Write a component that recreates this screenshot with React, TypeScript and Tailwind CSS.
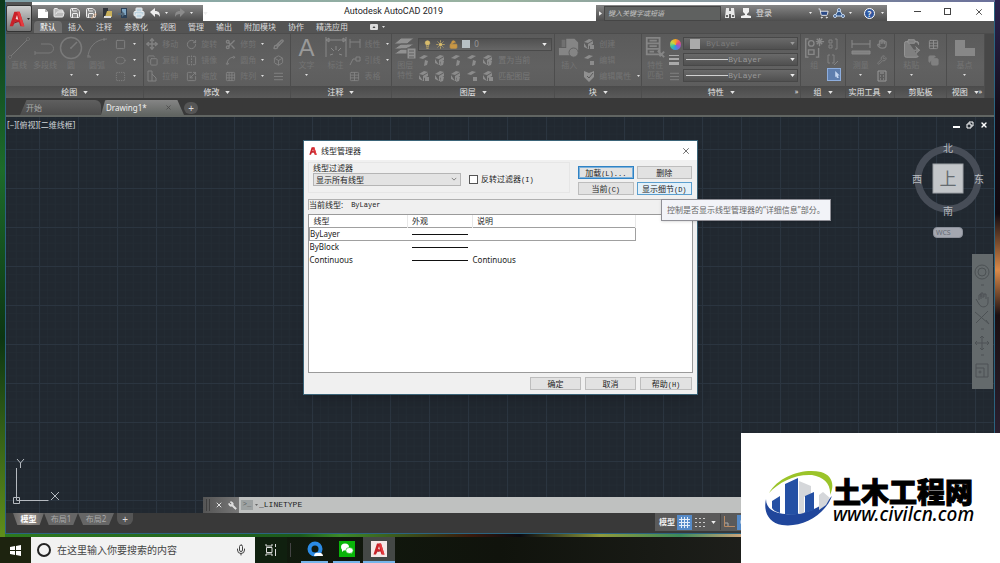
import type { ReactNode } from 'react';
import {
  AlignJustify, Box, Brush, Circle, ClipboardPaste, Copy, FlipHorizontal, FolderOpen, Grid3x3, Hand,
  Lightbulb, Mic, Move, Pencil, Printer, RotateCw, Save, Scaling, Scissors, ShoppingCart,
  Spline, Square, SquareDashed, Sun, Table, Unlock, Wrench, X,
} from 'lucide-react';

const MENU = ['默认', '插入', '注释', '参数化', '视图', '管理', '输出', '附加模块', '协作', '精选应用'];

const LINETYPES = [
  { name: 'ByLayer', note: '' },
  { name: 'ByBlock', note: '' },
  { name: 'Continuous', note: 'Continuous' },
];

const small = { size: 11, strokeWidth: 2 };

/* ── Shared bits ── */

function Caret({ className = '', large = false }: { className?: string; large?: boolean }) {
  return (
    <svg viewBox="0 0 6 4" className={`shrink-0 ${large ? 'w-[5px] h-[3px]' : 'w-[3px] h-0.5'} ${className}`}>
      <path d="M0 0h6L3 4z" fill="currentColor" />
    </svg>
  );
}

function Panel({ title, className, caret = true, more = false, children }: {
  title: string; className: string; caret?: boolean; more?: boolean; children: ReactNode;
}) {
  return (
    <section className={`flex flex-col min-w-0 border-r border-[#4d4d4d] ${className}`}>
      <div className="flex h-[52px] pt-0.5 overflow-hidden text-[#7a7a7a]">{children}</div>
      <h2 className="relative flex h-3 items-center justify-center gap-1.5 bg-linear-to-b from-[#4b4b4b] to-[#5a5a5a] text-[#e4e4e4]">
        {title}
        {caret && <Caret large />}
        {more && <span className="absolute right-0.5 text-[7px]">»</span>}
      </h2>
    </section>
  );
}

function BigTool({ label, label2, caret, className = 'w-[26px]', children }: {
  label: string; label2?: string; caret?: boolean; className?: string; children: ReactNode;
}) {
  return (
    <button className={`flex flex-col items-center shrink-0 ${className}`}>
      <span className="flex h-6 items-center justify-center">{children}</span>
      <span className="leading-[10px] whitespace-nowrap text-[#747474]">{label}</span>
      {label2 && <span className="leading-[10px] text-[#747474]">{label2}</span>}
      {caret && <Caret className="mt-1 text-[#ddd]" />}
    </button>
  );
}

function Tool({ label, caret, className = '', children }: {
  label?: string; caret?: boolean; className?: string; children: ReactNode;
}) {
  return (
    <button className={`flex h-4 items-center gap-1 ${className}`} aria-label={label ?? 'tool'}>
      <span className="w-3 flex justify-center shrink-0 text-[#828282]">{children}</span>
      {label && <span className="whitespace-nowrap text-[#747474]">{label}</span>}
      {caret && <Caret className="ml-auto text-[#ddd]" />}
    </button>
  );
}

function Stack({ className = '', children }: { className?: string; children: ReactNode }) {
  return <div className={`flex flex-col shrink-0 ${className}`}>{children}</div>;
}

function LayerIcon({ dot }: { dot: number }) {
  return (
    <svg viewBox="0 0 12 12" className="w-3 h-3" fill="#8c8c8c">
      <path d="M1 4l5-3 4 1-5 3z" />
      {dot % 2 === 0 && <path d="M1 5v4l4 2V6l5-3v3L6 8v3H5z" />}
      <path d={dot % 3 === 0 ? 'M7 7h4v4H7z' : 'M7 6l3 1-1 4-3 1z'} />
    </svg>
  );
}

function AutocadA({ className }: { className: string }) {
  return (
    <svg viewBox="0 0 24 24" className={className}>
      <path d="M1 23L8 1h8l7 22h-6l-2-6-6-1-3 7z" fill="#c92229" />
      <path d="M10 12l2-6 2 7z" fill="#f2dada" />
      <path d="M1 23l9-7h5l-9 3z" fill="#8b1117" />
      <path d="M12 1h4l7 22h-4z" fill="#e63b3f" />
    </svg>
  );
}

function ArrowBack({ className = '' }: { className?: string }) {
  return (
    <svg viewBox="0 0 12 12" className={`w-3 h-3 ${className}`} fill="currentColor">
      <path d="M1 5l5-4v3c4 0 5 2 5 6-1-2-2-3-5-3v3z" />
    </svg>
  );
}

/* ── Title bar and menu ── */

function TitleBar() {
  return (
    <div className="flex h-[19px] bg-white">
      <div className="flex w-[171px] mt-[3px] items-center bg-linear-to-b from-[#858585] to-[#4d4d4d] text-[#eee] pl-[5px] gap-1">
        <button aria-label="新建">
          <svg viewBox="0 0 12 12" className="w-3 h-3"><path d="M1 2h7l3 3v6H1z" fill="#fff" /><path d="M8 2v3h3" fill="#bbb" /></svg>
        </button>
        <button aria-label="打开"><FolderOpen size={12} fill="#bbb" /></button>
        <button aria-label="保存"><Save size={12} fill="#888" /></button>
        <button aria-label="另存为" className="flex">
          <Save size={12} fill="#888" />
          <Pencil size={6} className="-ml-1.5 self-end text-[#e0a070]" />
        </button>
        <button aria-label="打印机设置">
          <svg viewBox="0 0 12 12" className="w-3 h-3"><path d="M2 1h5v9H2z" fill="#30343a" /><path d="M6 4h5v6H4z" fill="#c9b05a" /><path d="M3 9h7v2H3z" fill="#ddd" /></svg>
        </button>
        <button aria-label="手机">
          <svg viewBox="0 0 12 12" className="w-3 h-3"><path d="M4 1h6v10H4z" fill="#2d4258" /><path d="M5 2h4v6H5z" fill="#7fa6c4" /><path d="M1 6h4V4l3 3-3 3V8H1z" fill="#54697a" /></svg>
        </button>
        <button aria-label="打印"><Printer size={12} fill="#bcd2de" /></button>
        <button aria-label="放弃"><ArrowBack /></button>
        <Caret />
        <button aria-label="重做" className="ml-0.5 text-[#8b8b8b]"><ArrowBack className="-scale-x-100" /></button>
        <Caret />
        <span className="w-px h-3 ml-0.5 bg-[#555]" />
        <Caret large />
      </div>
      <h1 className="flex-1 pr-3 text-center text-[9px] leading-[19px] text-[#222] font-['Roboto',sans-serif]">Autodesk AutoCAD 2019</h1>
      <div className="flex w-[291px] mt-[3px] items-center bg-linear-to-b from-[#858585] to-[#4d4d4d] text-[#eee]">
        <button aria-label="展开" className="w-2 flex justify-center"><Caret large className="-rotate-90" /></button>
        <input
          aria-label="搜索帮助"
          placeholder="键入关键字或短语"
          className="w-[117px] h-[15px] px-[3px] bg-[#5f6160] border border-[#454545] text-[7px] italic placeholder:text-[#c4c4c4]"
        />
        <button aria-label="搜索" className="ml-[3px]">
          <svg viewBox="0 0 12 12" className="w-3 h-3" fill="#e8e8e8"><path d="M2 1h3v3h2V1h3l1 10H7V7H5v4H1z" /><path d="M2 8h2v2H2zM8 8h2v2H8z" fill="#666" /></svg>
        </button>
        <button className="flex items-center gap-1 ml-1 whitespace-nowrap text-[#ddd]">
          <svg viewBox="0 0 12 12" className="w-3 h-3" fill="#f0f0f0"><path d="M3 1h6v4L7 7v1l4 1v2H1V9l4-1V7L3 5z" /></svg>
          登录
        </button>
        <Caret className="ml-[37px]" />
        <button aria-label="商店" className="ml-1.5"><ShoppingCart size={11} fill="#2c4a86" /></button>
        <button aria-label="应用" className="ml-1">
          <svg viewBox="0 0 12 12" className="w-3 h-3" stroke="#c9dcf2" fill="#31558a"><path d="M6 2l4 7H2z" /><circle cx="6" cy="3" r="1.5" /><circle cx="2" cy="9" r="1.5" /><circle cx="10" cy="9" r="1.5" /></svg>
        </button>
        <Caret className="ml-1" />
        <button aria-label="帮助" className="ml-3 w-[11px] h-[11px] rounded-full border border-white bg-[#2f57a0] text-[8px] leading-[9px] font-bold">?</button>
        <Caret className="ml-1.5" />
      </div>
      <div className="flex w-[107px] items-center justify-between pl-[27px] pr-2.5 text-[#333]">
        <button aria-label="最小化" className="w-[7px] h-px bg-[#444]" />
        <button aria-label="最大化" className="w-[7px] h-[7px] border border-[#444]" />
        <button aria-label="关闭"><X size={10} strokeWidth={2} /></button>
      </div>
    </div>
  );
}

function Header() {
  return (
    <header className="flex bg-[#545454]">
      <button aria-label="AutoCAD" className="w-[26px] h-[27px] mt-[3px] flex items-center gap-0.5 pl-0.5 rounded-xs border border-[#333] bg-linear-to-b from-[#cfcfcf] to-[#777] shrink-0">
        <AutocadA className="w-4 h-5" />
        <Caret className="text-[#222]" />
      </button>
      <div className="flex-1 min-w-0">
        <TitleBar />
        <nav className="flex h-3 pl-0.5 text-[#dcdcdc]">
          {MENU.map((item, i) => (
            <button key={item} className={`px-1.5 leading-3 ${i === 0 ? 'bg-[#6e6e6e] text-white rounded-t-sm' : ''}`}>
              {item}
            </button>
          ))}
          <button aria-label="功能区" className="flex items-center gap-1 ml-4">
            <svg viewBox="0 0 8 6" className="w-2 h-1.5"><rect width="8" height="6" rx="1" fill="#ddd" /><path d="M2.500 4L4 2l1.500 2z" fill="#444" /></svg>
            <Caret />
          </button>
        </nav>
      </div>
    </header>
  );
}

/* ── Ribbon ── */

function PropertySelect({ label, swatch }: { label: string; swatch?: boolean }) {
  return (
    <label className="flex h-[13px] items-center border border-[#484848] bg-linear-to-b from-[#6a6a6a] to-[#505050] pr-0.5">
      {swatch
        ? <span className="w-2.5 h-2.5 ml-1.5 mr-1.5 bg-[#aaa]" />
        : <span className="w-[42px] h-px ml-0.5 bg-[#d0d0d0]" />}
      <select aria-label={label} className={`flex-1 min-w-0 appearance-none font-mono ${swatch ? 'text-[#7c7c7c]' : 'text-[#999]'}`}>
        <option>ByLayer</option>
      </select>
      <Caret large className={swatch ? 'text-[#999]' : 'text-[#eee]'} />
    </label>
  );
}

function Ribbon() {
  return (
    <div className="flex bg-linear-to-b from-[#5b5b5b] via-[#616161] to-[#5b5b5b] border-t border-[#4c4c4c]">
      <Panel title="绘图" className="flex-[139]">
        <BigTool label="直线"><svg viewBox="0 0 24 24" className="w-6 h-6" stroke="currentColor"><path d="M3 21L21 3" /><path d="M2 20h2v2H2zM20 2h2v2h-2z" /></svg></BigTool>
        <BigTool label="多段线"><svg viewBox="0 0 24 24" className="w-6 h-6" stroke="currentColor" fill="none"><path d="M2 17h14a4.500 4.500 0 000-9H8M2 15v4" /></svg></BigTool>
        <BigTool label="圆" caret><svg viewBox="0 0 24 24" className="w-6 h-6" stroke="currentColor" fill="none" strokeWidth="1.500"><circle cx="12" cy="12" r="10.500" /><path d="M12 12l6-6M11 12h2" /></svg></BigTool>
        <BigTool label="圆弧" caret><svg viewBox="0 0 24 24" className="w-6 h-6" stroke="currentColor" fill="none"><path d="M3 22C3 12 10 3 22 3M2 20h3v2M19 2v3" /></svg></BigTool>
        <Stack className="ml-1 w-[22px]">
          <Tool caret><Square {...small} /></Tool>
          <Tool caret><Circle {...small} className="scale-y-75" /></Tool>
          <Tool caret><SquareDashed {...small} /></Tool>
        </Stack>
      </Panel>

      <Panel title="修改" className="flex-[147]">
        <Stack className="ml-0.5 w-[39px]">
          <Tool label="移动"><Move size={12} strokeWidth={3} /></Tool>
          <Tool label="复制"><Copy {...small} /></Tool>
          <Tool label="拉伸"><svg viewBox="0 0 12 12" className="w-3 h-3" stroke="currentColor" fill="none"><path d="M2 1h4v10H2zM6 4l4 4v3H6" /></svg></Tool>
        </Stack>
        <Stack className="w-[39px]">
          <Tool label="旋转"><RotateCw {...small} /></Tool>
          <Tool label="镜像"><FlipHorizontal {...small} /></Tool>
          <Tool label="缩放"><Scaling {...small} /></Tool>
        </Stack>
        <Stack className="w-10">
          <Tool label="修剪" caret><Scissors size={11} strokeWidth={3} /></Tool>
          <Tool label="圆角" caret><Spline {...small} /></Tool>
          <Tool label="阵列" caret><Grid3x3 {...small} /></Tool>
        </Stack>
        <Stack className="ml-2">
          <Tool><Brush size={11} strokeWidth={3} /></Tool>
          <Tool><Box {...small} /></Tool>
          <Tool><AlignJustify {...small} /></Tool>
        </Stack>
      </Panel>

      <Panel title="注释" className="flex-[102]">
        <BigTool label="文字" caret className="w-8"><span className="text-[24px] leading-6 text-[#999] font-['Liberation_Sans',sans-serif]">A</span></BigTool>
        <BigTool label="标注">
          <svg viewBox="0 0 24 24" className="w-6 h-6" stroke="#888" fill="none"><path d="M2 1v20M22 1v20M2 4h20M2 4l3-2v4zM22 4l-3-2v4zM6 19l3-1M12 10v4M7 12l3 3M17 12l-3 3M18 19l-3-1" /></svg>
        </BigTool>
        <Stack className="w-10">
          <Tool label="线性" caret><svg viewBox="0 0 12 12" className="w-3 h-3" stroke="currentColor"><path d="M1 1v9M11 1v9M1 4h10" /></svg></Tool>
          <Tool label="引线" caret><svg viewBox="0 0 12 12" className="w-3 h-3" stroke="currentColor" fill="none"><path d="M1 11l3-6h3M7 3h4v4H7z" /></svg></Tool>
          <Tool label="表格"><Table {...small} /></Tool>
        </Stack>
      </Panel>

      <Panel title="图层" className="flex-[164]">
        <BigTool label="图层" label2="特性">
          <svg viewBox="0 0 24 24" className="w-6 h-6" fill="#919191" stroke="#5e5e5e">
            <path d="M1 18l7-5h13l-7 5zM1 13l7-5h13l-7 5zM1 8l7-6h13l-7 6z" /><path d="M14 12h9v11h-9z" /><path d="M16 15h5M16 18h5M16 21h5" />
          </svg>
        </BigTool>
        <div className="flex-1 min-w-0 pr-0.5">
          <div className="flex h-4 items-center">
            <label className="flex flex-1 h-[13px] items-center gap-1 px-1 border border-[#4a4a4a] bg-linear-to-b from-[#515151] to-[#666]">
              <Lightbulb size={9} fill="#d8bc6c" className="text-[#d8bc6c]" />
              <Sun size={9} fill="#d8bc6c" className="text-[#d8bc6c]" />
              <Unlock size={9} fill="#c99745" className="text-[#c99745]" />
              <span className="w-2 h-2 bg-[#b8c0c4]" />
              <select aria-label="图层" className="flex-1 appearance-none text-[#999]"><option>0</option></select>
              <Caret large className="text-[#eee]" />
            </label>
          </div>
          <div className="flex h-4 items-center gap-1">
            {[1, 2, 5, 7, 4].map((n) => <button key={n} aria-label="图层工具"><LayerIcon dot={n} /></button>)}
            <span className="text-[#787878]">置为当前</span>
          </div>
          <div className="flex h-4 items-center gap-1">
            {[6, 8, 10, 3, 12].map((n) => <button key={n} aria-label="图层工具"><LayerIcon dot={n} /></button>)}
            <span className="text-[#787878]">匹配图层</span>
          </div>
        </div>
      </Panel>

      <Panel title="块" className="flex-[87]">
        <BigTool label="插入" className="w-7">
          <svg viewBox="0 0 24 24" className="w-[22px] h-[22px]" fill="#858585"><path d="M9 2h9l4 4v9H9zM1 12h12v8H1z" /><circle cx="17" cy="17" r="5" stroke="#5f5f5f" /><path d="M4 3h4v8H4z" fill="#707070" /></svg>
        </BigTool>
        <Stack className="w-[57px]">
          <Tool label="创建"><LayerIcon dot={6} /></Tool>
          <Tool label="编辑"><LayerIcon dot={3} /></Tool>
          <Tool label="编辑属性" caret><svg viewBox="0 0 12 12" className="w-3 h-3" fill="#909090"><path d="M1 1l5 2 5-2v6l-5 5-5-5z" /><path d="M4 6l2 2 4-5" stroke="#5a5a5a" fill="none" /></svg></Tool>
        </Stack>
      </Panel>

      <Panel title="特性" className="flex-[160]" more>
        <BigTool label="特性" label2="匹配">
          <svg viewBox="0 0 24 24" className="w-[22px] h-[22px]" fill="none" stroke="#858585" strokeWidth="2"><path d="M3 1h14v18H3zM3 7h14M3 13h14M6 4h8M6 10h8M6 16h5M15 15l7 7M22 16l-5 5" /></svg>
        </BigTool>
        <Stack className="w-[15px]">
          <span className="flex h-4 items-center justify-center">
            <span className="w-[11px] h-[11px] rounded-full bg-[conic-gradient(#f5a623,#e94f77,#8c5bd6,#3d8fe0,#37c2a0,#c8d544,#f5a623)]" />
          </span>
          <Tool><svg viewBox="0 0 12 12" className="w-3 h-3" fill="#aaa"><path d="M1 1h10v1H1zM1 4h10v2H1zM1 8h10v3H1z" /></svg></Tool>
          <Tool><AlignJustify {...small} /></Tool>
        </Stack>
        <div className="flex flex-col flex-1 min-w-0 gap-[3px] pr-0.5 pt-px">
          <PropertySelect label="颜色" swatch />
          <PropertySelect label="线宽" />
          <PropertySelect label="线型" />
        </div>
      </Panel>

      <Panel title="组" className="flex-[44]">
        <BigTool label="组">
          <svg viewBox="0 0 24 24" className="w-[22px] h-[22px]" fill="none" stroke="#888" strokeWidth="1.500"><path d="M6 2H3v20h3M14 22h3V12M18 1v9M14 5h9M15 2l6 6M21 2l-6 6" /><circle cx="9" cy="7" r="3" /><path d="M6 14h6v5H6z" /></svg>
        </BigTool>
        <Stack>
          <Tool><svg viewBox="0 0 12 12" className="w-3 h-3" stroke="currentColor" fill="none"><path d="M2 2h3v3H2zM2 7h3v3H2zM8 1h2v10H8" /></svg></Tool>
          <Tool><svg viewBox="0 0 12 12" className="w-3 h-3" stroke="currentColor" fill="none"><path d="M3 1H1v8h2M5 1h2v8H5M7 11l4-4" /></svg></Tool>
          <button aria-label="组选择" className="w-[14px] h-[13px] border border-[#8eaede] bg-[#5f7fae] flex justify-end items-center">
            <svg viewBox="0 0 6 9" className="w-1.5 h-2" fill="#c5d6ef"><path d="M1 0l5 5H4l1 3H3L2 6 1 7z" /></svg>
          </button>
        </Stack>
      </Panel>

      <Panel title="实用工具" className="flex-[49]">
        <BigTool label="测量" caret className="w-[30px]">
          <svg viewBox="0 0 20 20" className="w-5 h-5" stroke="#8a8a8a" fill="#808080"><path d="M1 2v8M19 2v8M1 6h18" fill="none" /><path d="M1 13h18v3H1z" /></svg>
        </BigTool>
        <Stack>
          <Tool><Hand size={10} strokeWidth={3} /></Tool>
          <Tool><Wrench size={10} strokeWidth={2} /></Tool>
          <Tool><svg viewBox="0 0 12 12" className="w-3 h-3" stroke="#999" fill="none"><path d="M2 1h8v10H2zM4 3h4M4 6h1M7 6h1M4 9h1M7 9h1" /></svg></Tool>
        </Stack>
      </Panel>

      <Panel title="剪贴板" className="flex-[51]" caret={false}>
        <BigTool label="粘贴" caret className="w-8"><ClipboardPaste size={21} fill="#808080" strokeWidth={1} className="text-[#999]" /></BigTool>
        <Stack>
          <Tool><Table {...small} className="text-[#909090]" /></Tool>
          <Tool><Copy {...small} fill="#808080" /></Tool>
        </Stack>
      </Panel>

      <Panel title="视图" className="flex-[38]" more>
        <BigTool label="基点" caret className="w-9">
          <svg viewBox="0 0 22 18" className="w-[22px] h-[18px]" fill="#878787"><path d="M1 1h10v8h10v8H1z" /></svg>
        </BigTool>
      </Panel>
      <div className="flex-[9] bg-[#474747]" />
    </div>
  );
}

function FileTabs() {
  return (
    <div className="flex h-[19px] pl-3.5 items-end bg-[#393939] border-b-2 border-[#616562]">
      <button className="flex w-[81px] h-[15px] items-center pl-1.5 rounded-t-md bg-linear-to-b from-[#5f5f5f] to-[#4b4b4b] text-[#aaa] [clip-path:polygon(8%_0,100%_0,100%_100%,0_100%)]">开始</button>
      <div className="flex w-[83px] h-[15px] items-center pl-[5px] rounded-t-md bg-linear-to-b from-[#858585] to-[#616562] text-[#f0f0f0] [clip-path:polygon(5%_0,92%_0,100%_100%,0_100%)]">
        <button>Drawing1*</button>
        <button aria-label="关闭图形" className="ml-auto mr-3 text-[#4d4d4d]"><X size={7} strokeWidth={3} /></button>
      </div>
      <button aria-label="新图形" className="w-3.5 h-3 mb-px rounded-md bg-[#555] text-[10px] leading-3 text-[#ddd]">+</button>
    </div>
  );
}

/* ── Drawing area ── */

function ViewCube() {
  return (
    <div className="absolute right-[9px] top-[25px] w-[74px] h-[100px]">
      <svg viewBox="0 0 74 74" className="w-[74px] h-[74px] overflow-visible">
        <circle cx="37" cy="37" r="30" fill="none" stroke="#474d57" strokeWidth="7" />
        <rect x="22" y="22" width="30" height="29" fill="#c3c6c9" stroke="#9da1a5" />
        <g fill="#b9bcc0" fontSize="10" textAnchor="middle" fontFamily="Noto Sans CJK SC, sans-serif">
          <text x="37" y="10">北</text>
          <text x="37" y="73">南</text>
          <text x="6" y="41">西</text>
          <text x="68" y="41">东</text>
          <text x="37" y="43" fontSize="17" fill="#656b70">上</text>
        </g>
      </svg>
      <button className="flex items-center w-[30px] h-[11px] mt-[11px] mx-auto px-0.5 rounded-sm border border-[#8b8f99] bg-[#a4a7b0] text-[7px] text-[#666b75]">WCS</button>
    </div>
  );
}

function NavigationBar() {
  return (
    <svg viewBox="0 0 21 135" className="absolute right-px top-[137px] w-[21px] h-[135px]" fill="none" stroke="#4c5154">
      <rect x="0" y="0" width="21" height="135" fill="#646a6c" stroke="none" />
      <circle cx="10" cy="18" r="7" /><circle cx="10" cy="18" r="4" />
      <path d="M9 31h3M4 45l3 5c2 4 8 4 9-1v-6M7 46v-5l2-1v5M9 43v-4h2v5M12 43v-3h2v5" />
      <path d="M3 58l14 12M16 57L4 69M14 66l3 4M9 75h3M10 82v14M3 89h14M8 84l2-2 2 2M8 94l2 2 2-2M5 87l-2 2 2 2M15 87l2 2-2 2M9 101h3" />
      <path d="M4 110h12v13H4zM4 114h8v9" /><circle cx="8" cy="118" r="1" />
    </svg>
  );
}

function Canvas() {
  return (
    <main className="relative flex-1 min-h-0 overflow-hidden bg-[#212830]">
      <svg className="absolute inset-0 w-full h-full">
        <defs>
          <pattern id="minor" width="7.800" height="7.800" x="2" y="1" patternUnits="userSpaceOnUse">
            <path d="M0 0h7.800M0 0v7.800" stroke="#252d36" fill="none" />
          </pattern>
          <pattern id="major" width="39" height="39" x="33" y="32" patternUnits="userSpaceOnUse">
            <path d="M0 .500h39M.500 0v39" stroke="#2b3540" fill="none" />
          </pattern>
        </defs>
        <rect width="100%" height="100%" fill="url(#minor)" />
        <rect width="100%" height="100%" fill="url(#major)" />
      </svg>
      <div className="relative flex items-center justify-between pt-0.5 pl-px pr-1.5 text-[#d0d4d8] leading-3">
        <span>[−][俯视][二维线框]</span>
        <div className="flex items-center gap-1.5 text-white">
          <button aria-label="最小化视口" className="w-[7px] h-0.5 mt-1 bg-white" />
          <button aria-label="还原视口">
            <svg viewBox="0 0 8 8" className="w-2 h-2" stroke="#fff" fill="none"><path d="M1 3h4v4H1zM3 3V1h4v4H5" /></svg>
          </button>
          <button aria-label="关闭视口"><X size={8} strokeWidth={4} /></button>
        </div>
      </div>
      <ViewCube />
      <NavigationBar />
      <svg viewBox="0 0 56 50" className="absolute left-1.5 bottom-1.5 w-14 h-[50px]" stroke="#b5bac0" fill="none">
        <path d="M4.500 11v32M4.500 43.500h32M1.500 40.500h6v6h-6zM5 2l3.500 4L12 2M8.500 6v5M39 35l8 8M47 35l-8 8" />
      </svg>
      <div className="absolute left-[197px] right-0 bottom-0 flex h-4">
        <div className="flex w-9 items-center justify-around bg-linear-to-r from-[#555] to-[#777] text-[#e0e0e0]">
          <span className="w-1 h-3 border-x border-[#3f3f3f]" />
          <button aria-label="关闭命令行"><X size={8} strokeWidth={3} /></button>
          <button aria-label="自定义"><Wrench size={9} fill="#ddd" className="-scale-x-100" /></button>
        </div>
        <label className="flex flex-1 items-center pl-0.5 bg-[#bfc1c0] text-[#333]">
          <span className="w-3 h-2.5 bg-[#9da2a2] text-[7px] leading-[9px] text-center font-mono text-[#5d6262]">&gt;_</span>
          <Caret className="ml-0.5 mr-px text-[#666]" />
          <input aria-label="命令" defaultValue="_LINETYPE" className="w-40 font-mono text-[#222] outline-none" />
        </label>
      </div>
    </main>
  );
}

function StatusBar() {
  const tab = 'h-3 leading-3 text-center [clip-path:polygon(0_0,100%_0,86%_100%,14%_100%)]';
  return (
    <footer className="flex h-5 bg-[#393939]">
      <nav className="flex pl-[7px] text-[#aaa]">
        <button className={`${tab} w-[31px] bg-linear-to-r from-[#666] via-[#9b928c] to-[#666] text-white font-bold`}>模型</button>
        <button className={`${tab} w-[34px] bg-[#666]`}>布局1</button>
        <button className={`${tab} w-9 bg-[#666]`}>布局2</button>
        <button aria-label="新建布局" className="w-4 h-3 ml-[3px] rounded-b-md bg-[#555] text-[10px] leading-3 text-[#ddd]">+</button>
      </nav>
      <div className="flex ml-auto w-[339px] h-[18px] items-center bg-[#5a5a5a] text-[#eee]">
        <button className="px-0.5 ml-0.5 font-bold">模型</button>
        <button aria-label="栅格" className="w-[15px] h-[15px] flex items-center justify-center bg-[#568bc8]">
          <svg viewBox="0 0 11 11" className="w-[11px] h-[11px]" stroke="#e3edf8"><path d="M2.500 0v11M5.500 0v11M8.500 0v11M0 2.500h11M0 5.500h11M0 8.500h11" /></svg>
        </button>
        <button aria-label="捕捉" className="ml-[3px]">
          <svg viewBox="0 0 10 10" className="w-2.5 h-2.5" fill="#ccc"><path d="M0 1h2v1H0zM4 1h2v1H4zM8 1h2v1H8zM0 5h2v1H0zM4 5h2v1H4zM8 5h2v1H8zM0 9h2v1H0zM4 9h2v1H4zM8 9h2v1H8z" /></svg>
        </button>
        <Caret large className="ml-1.5" />
        <span className="w-px h-4 ml-1 bg-[#444]" />
        <button aria-label="正交" className="ml-0.5">
          <svg viewBox="0 0 12 12" className="w-3 h-3" fill="none"><path d="M1.500 0v10.500H12" stroke="#b98a63" /><path d="M2 7h3v3" stroke="#aaa" /></svg>
        </button>
        <button aria-label="极轴" className="w-4 h-[15px] ml-0.5 flex items-center justify-center bg-[#568bc8]"><Circle size={10} /></button>
      </div>
    </footer>
  );
}

/* ── Linetype manager ── */

function Key({ children }: { children: string }) {
  return <span className="font-mono text-[7px]">{children}</span>;
}

function DialogButton({ children, className = 'border-[#bdbdbd] bg-[#e2e2e2]' }: { children: ReactNode; className?: string }) {
  return <button className={`h-[13px] border leading-[11px] ${className}`}>{children}</button>;
}

function LinetypeDialog() {
  return (
    <div role="dialog" aria-labelledby="dialog-title" className="absolute left-[303px] top-[140px] w-[395px] border border-[#3b6478] bg-[#f0f0f0] text-[#222] shadow-lg">
      <div className="flex h-[19px] items-center bg-white pl-[5px] pr-1.5">
        <AutocadA className="w-2 h-2" />
        <h2 id="dialog-title" className="ml-1">线型管理器</h2>
        <button aria-label="关闭" className="ml-auto text-[#555]"><X size={10} strokeWidth={2} /></button>
      </div>

      <div className="flex pl-1 pr-[5px] pt-0.5">
        <fieldset className="flex-1 h-[31px] mr-2 px-1 border border-[#e6e6e6]">
          <label htmlFor="filter" className="block w-max leading-[10px]">线型过滤器</label>
          <div className="flex items-center">
            <div className="relative flex w-[148px]">
              <select id="filter" className="w-full h-[13px] pl-0.5 appearance-none border border-[#b5b5b5] bg-[#e3e3e3]">
                <option>显示所有线型</option>
              </select>
              <svg viewBox="0 0 8 5" className="absolute right-1 top-1 w-1.5 h-1" stroke="#666" fill="none"><path d="M1 1l3 3 3-3" /></svg>
            </div>
            <label className="flex items-center gap-[3px] ml-2">
              <input type="checkbox" className="appearance-none w-[9px] h-[9px] border border-[#555] bg-white" />
              <span className="leading-3">反转过滤器<Key>(I)</Key></span>
            </label>
          </div>
        </fieldset>
        <div className="grid grid-cols-2 gap-x-[3px] gap-y-[3px] w-[114px] pt-1">
          <DialogButton className="border-[#2f82c4] outline outline-[#7db2dc] -outline-offset-2 bg-[#e2e2e2]">加载<Key>(L)...</Key></DialogButton>
          <DialogButton>删除</DialogButton>
          <DialogButton>当前<Key>(C)</Key></DialogButton>
          <DialogButton className="border-[#5b9fce] bg-[#e2f0f9]">显示细节<Key>(D)</Key></DialogButton>
        </div>
      </div>

      <p className="flex items-center gap-2 h-[11px] mx-1 mt-1 border-t border-l border-[#b0b0b0] leading-[10px]">
        <span>当前线型:</span><Key>ByLayer</Key>
      </p>

      <div className="h-[159px] mx-1 mt-1 border border-[#9a9a9a] bg-white">
        <table className="w-[327px] table-fixed border-collapse text-left">
          <thead>
            <tr className="h-3">
              <th className="w-[98px] pl-1 font-normal border-r border-[#e8e8e8]">线型</th>
              <th className="w-[65px] pl-1 font-normal border-r border-[#e8e8e8]">外观</th>
              <th className="pl-1 font-normal border-r border-[#e8e8e8]">说明</th>
            </tr>
          </thead>
          <tbody>
            {LINETYPES.map((row, i) => (
              <tr key={row.name} className={`h-[13px] leading-3 ${i === 0 ? 'border border-[#a0a0a0]' : ''}`}>
                <td>{row.name}</td>
                <td><div className="w-14 h-px ml-1 bg-[#111]" /></td>
                <td>{row.note}</td>
              </tr>
            ))}
          </tbody>
        </table>
      </div>

      <div className="flex justify-end gap-1 py-1 pr-[5px]">
        <DialogButton className="w-[51px] border-[#bdbdbd] bg-[#e2e2e2]">确定</DialogButton>
        <DialogButton className="w-[51px] border-[#bdbdbd] bg-[#e2e2e2]">取消</DialogButton>
        <DialogButton className="w-[52px] border-[#bdbdbd] bg-[#e2e2e2]">帮助<Key>(H)</Key></DialogButton>
      </div>

      <div role="tooltip" className="absolute left-[357px] top-[58px] h-[22px] px-[5px] border border-[#8f8f96] bg-[#f2f3f8] leading-5 whitespace-nowrap text-[#666] shadow">
        控制是否显示线型管理器的“详细信息”部分。
      </div>
    </div>
  );
}

/* ── Desktop ── */

function Taskbar() {
  return (
    <div className="flex h-[26px] items-stretch bg-linear-to-r from-[#10240f] via-[#10130c] to-[#2c2b2b]">
      <button aria-label="开始" className="w-[31px] flex items-center justify-center bg-[#1d230f]">
        <svg viewBox="0 0 11 11" className="w-[11px] h-[11px]" fill="#fff"><path d="M0 2l5-1v4H0zM6 1l5-1v5H6zM0 6h5v4L0 9zM6 6h5v5l-5-1z" /></svg>
      </button>
      <label className="flex w-56 items-center pl-1.5 pr-2 bg-[#f2f2f2] text-[#444]">
        <span className="w-3.5 h-3.5 rounded-full border-2 border-[#222] shrink-0" />
        <input aria-label="搜索" placeholder="在这里输入你要搜索的内容" className="flex-1 min-w-0 ml-1.5 text-[10px] placeholder:text-[#444] outline-none" />
        <Mic size={12} strokeWidth={2} />
      </label>
      <button aria-label="任务视图" className="w-8 flex items-center justify-center bg-[#10200f]">
        <svg viewBox="0 0 12 12" className="w-3 h-3" stroke="#ddd" fill="none"><path d="M1 0v2h6V0M1 12v-2h6v2M1.500 3.500h5.500v5H1.500zM10.500 0v3M10.500 5v7" /></svg>
      </button>
      <span className="w-px h-3.5 ml-[3px] mr-2.5 self-center bg-[#444]" />
      <button aria-label="浏览器" className="w-[27px] flex items-center justify-center border-b-2 border-[#76b5ea]">
        <svg viewBox="0 0 16 16" className="w-4 h-4"><circle cx="8" cy="8" r="5.500" fill="none" stroke="#2b8be4" strokeWidth="4" /><path d="M7 15c0-3 3-4 4-3 3-1 5 1 5 3z" fill="#fff" /></svg>
      </button>
      <button aria-label="微信" className="w-[27px] ml-[5px] flex items-center justify-center border-b-2 border-[#76b5ea]">
        <svg viewBox="0 0 16 16" className="w-4 h-4"><rect width="16" height="16" fill="#09b509" /><ellipse cx="6" cy="6" rx="4" ry="3.500" fill="#fff" /><path d="M3 11V8h3zM13 13v-3h-2z" fill="#fff" /><ellipse cx="10.500" cy="9.500" rx="3.700" ry="3" fill="#fff" stroke="#09b509" strokeWidth=".6" /></svg>
      </button>
      <button aria-label="AutoCAD" className="w-8 ml-[3px] flex items-center justify-center bg-[#444846] border-b-2 border-[#76b5ea]">
        <span className="w-4 h-4 bg-[#f4e8e8] p-0.5"><AutocadA className="w-3 h-3" /></span>
      </button>
    </div>
  );
}

function SiteBadge() {
  return (
    <div className="absolute right-0 bottom-0 flex items-center w-[259px] h-[130px] pl-6 bg-white text-black">
      <svg viewBox="0 0 68 56" className="w-[68px] h-14 shrink-0">
        <path d="M4 23C14 6 38-2 56 2c11 3 14 13 9 23 1-11-6-18-18-20C30 4 14 12 4 23z" fill="#9bc42a" />
        <path d="M1 29c-3 13 3 24 16 26 20 3 43-10 50-29C56 39 36 46 20 44 8 43 1 38 1 29z" fill="#20469b" />
        <path d="M34 11l12 5v8l-7 3v16l-5 1zM54 25l4-3 7 6-4 7-7 5z" fill="#d5d7da" />
        <path d="M20 14l13-6v36c-5 1-9 1-13 0zM7 31l8-5v17c-4-1-7-3-8-5zM40 26l9-4v18l-9 3z" fill="#2450a4" />
      </svg>
      <div className="mt-1.5">
        <div className="text-[28px] leading-[26px] font-black whitespace-nowrap [-webkit-text-stroke:1px_black]">土木工程网</div>
        <a href="#civilcn" className="block text-[19px] leading-[18px] italic font-medium">www.civilcn.com</a>
      </div>
    </div>
  );
}

export default function App() {
  return (
    <div className="relative flex flex-col h-screen overflow-hidden [background:linear-gradient(#0d3a1c,#1d6b2a_30%,#0c3512_60%,#6b9a1c)_0_0/5px_100%_no-repeat,linear-gradient(#2a2450,#140d18_20%,#120a10_38%,#d98a4a_48%,#1a0f12_56%,#3a3350)_100%_0/5px_100%_no-repeat,linear-gradient(90deg,#7fa0a8,#9ab3a0_50%,#6a6f9a)_0_0/100%_3px_no-repeat,linear-gradient(90deg,#2e7a1e,#1c5a1c_30%,#3d8a2a_34%,#3a1a0c_47%,#0a0a10_52%,#8f9a3c_60%,#3d8a5a_68%,#c9a37a_74%)] text-[8px] leading-3 font-['Noto_Sans','Noto_Sans_CJK_SC',sans-serif] [&_.font-mono]:font-['Liberation_Mono','Noto_Sans_CJK_SC',monospace]">
      <div className="flex flex-col flex-1 min-h-0 mx-[5px] mt-0.5 mb-[3px] border-x border-b border-[#2b6480]">
        <Header />
        <Ribbon />
        <FileTabs />
        <Canvas />
        <StatusBar />
      </div>
      <Taskbar />
      <LinetypeDialog />
      <SiteBadge />
    </div>
  );
}
